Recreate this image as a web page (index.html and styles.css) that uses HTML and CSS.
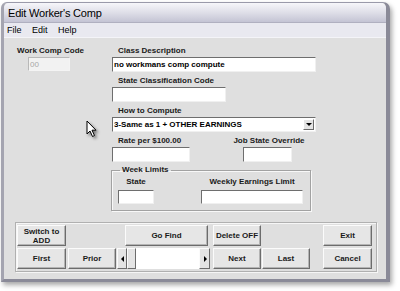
FILE: index.html
```html
<!DOCTYPE html>
<html lang="en">
<head>
    <meta charset="UTF-8">
    <title>Edit Worker's Comp</title>
    <link rel="stylesheet" href="styles.css">
</head>
<body>
    <div class="window">
        <div class="titlebar">Edit Worker's Comp</div>
        <div class="menubar">
            <span>File</span>
            <span>Edit</span>
            <span>Help</span>
        </div>
        <div class="client">
            <div class="form">
                <div class="col-left">
                    <div class="label">Work Comp Code</div>
                    <div class="input code disabled">00</div>
                </div>
                <div class="col-main">
                    <div class="field">
                        <div class="label">Class Description</div>
                        <div class="input wide">no workmans comp compute</div>
                    </div>
                    <div class="field">
                        <div class="label">State Classification Code</div>
                        <div class="input medium"></div>
                    </div>
                    <div class="field">
                        <div class="label">How to Compute</div>
                        <div class="input wide select">
                            <span>3-Same as 1 + OTHER EARNINGS</span>
                            <span class="drop"></span>
                        </div>
                    </div>
                    <div class="field-row">
                        <div class="field">
                            <div class="label">Rate per $100.00</div>
                            <div class="input rate"></div>
                        </div>
                        <div class="field centered override">
                            <div class="label">Job State Override</div>
                            <div class="input small"></div>
                        </div>
                    </div>
                    <fieldset class="group">
                        <legend>Week Limits</legend>
                        <div class="group-row">
                            <div class="field centered">
                                <div class="label">State</div>
                                <div class="input state"></div>
                            </div>
                            <div class="field centered limit">
                                <div class="label">Weekly Earnings Limit</div>
                                <div class="input earnings"></div>
                            </div>
                        </div>
                    </fieldset>
                </div>
            </div>

            <div class="buttons">
                <div class="btn-row">
                    <div class="btn two-line">Switch to<br>ADD</div>
                    <div class="btn go-find">Go Find</div>
                    <div class="btn delete">Delete OFF</div>
                    <div class="btn exit">Exit</div>
                </div>
                <div class="btn-row">
                    <div class="btn">First</div>
                    <div class="btn prior">Prior</div>
                    <div class="scroll">
                        <div class="arrow left"></div>
                        <div class="thumb"></div>
                        <div class="track"></div>
                        <div class="arrow right"></div>
                    </div>
                    <div class="btn next">Next</div>
                    <div class="btn last">Last</div>
                    <div class="btn cancel">Cancel</div>
                </div>
            </div>

            <svg class="cursor" width="12" height="18" viewBox="0 0 12 18">
                <path d="M1 1 L1 14 L4 11 L6.5 16.5 L8.5 15.5 L6 10.2 L10 10.2 Z" fill="#fff" stroke="#000" stroke-width="1" stroke-linejoin="miter"/>
            </svg>
        </div>
    </div>
</body>
</html>
```

FILE: styles.css
```css
body {
    margin: 0;
    background: #ffffff;
    font-family: 'Liberation Sans', Arial, sans-serif;
    width: 400px;
    height: 291px;
    overflow: hidden;
}

.window {
    margin: 2px 0 0 1px;
    width: 382px;
    border: 1px solid #8e8e9e;
    border-width: 1px 4px 3px 3px;
    border-color: #9a9aaa #8a8a98 #8a8a98 #a4a4b0;
    border-radius: 6px 7px 0 0;
    box-shadow: 2px 3px 5px rgba(0,0,0,0.35);
    background: #dfdfdf;
}

.titlebar {
    height: 19px;
    line-height: 20px;
    padding-left: 4px;
    font-size: 11px;
    letter-spacing: -0.2px;
    color: #000;
    background: linear-gradient(#f6f6fa, #dcdce6 55%, #c4c4d4);
    border-radius: 5px 5px 0 0;
    border-bottom: 1px solid #b0b0c0;
}

.menubar {
    height: 14px;
    line-height: 14px;
    padding-left: 3px;
    font-size: 9px;
    background: #e9e9f0;
    border-bottom: 1px solid #f4f4f8;
}

.menubar span {
    margin-right: 8px;
}

.client {
    position: relative;
    height: 241px;
    background: #dfdfdf;
}

.form {
    display: flex;
    padding: 6px 0 0 13px;
}

.label {
    font-size: 8px;
    font-weight: bold;
    line-height: 13px;
    height: 13px;
    color: #1a1a1a;
    white-space: nowrap;
}

.input {
    box-sizing: border-box;
    height: 15px;
    background: #fff;
    border: 1px solid;
    border-color: #6e6e6e #f0f0f0 #f0f0f0 #6e6e6e;
    font-size: 8px;
    font-weight: bold;
    line-height: 13px;
    padding-left: 1px;
    color: #000;
    white-space: nowrap;
    overflow: hidden;
}

.col-left {
    width: 95px;
}

.col-left .input {
    margin: 0 0 0 11px;
}

.code {
    width: 42px;
    height: 14px;
}

.disabled {
    background: #f2f2f2;
    color: #a8a8a8;
    font-weight: normal;
    border-color: #b8b8b8 #f4f4f4 #f4f4f4 #b8b8b8;
}

.col-main .field > .label {
    padding-left: 6px;
}

.field {
    margin-bottom: 2px;
}

.wide {
    width: 204px;
}

.medium {
    width: 114px;
}

.select {
    display: flex;
    justify-content: space-between;
}

.select .drop {
    position: relative;
    width: 11px;
    height: 11px;
    margin: 1px 1px 0 0;
    box-sizing: border-box;
    background: #e4e4e4;
    border: 1px solid;
    border-color: #fff #6a6a6a #6a6a6a #fff;
}

.select .drop::after {
    content: "";
    position: absolute;
    left: 2px;
    top: 3px;
    border-left: 3px solid transparent;
    border-right: 3px solid transparent;
    border-top: 3px solid #000;
}

.field-row {
    display: flex;
}

.rate {
    width: 78px;
}

.centered {
    display: flex;
    flex-direction: column;
    align-items: center;
}

.col-main .centered > .label {
    padding-left: 0;
}

.override {
    margin-left: 38px;
    width: 82px;
}

.override .input {
    margin-right: 4px;
}

.small {
    width: 49px;
}

.group {
    margin: 0 0 0 -1px;
    padding: 0 0 6px 6px;
    width: 192px;
    border: 1px solid #a2a2a2;
    box-shadow: inset 1px 1px 0 #f8f8f8, 1px 1px 0 #f8f8f8;
}

.group legend {
    font-size: 8px;
    font-weight: bold;
    line-height: 12px;
    padding: 0 2px;
    margin-left: 2px;
    color: #1a1a1a;
}

.group-row {
    display: flex;
}

.group .field {
    margin-bottom: 0;
}

.group .label {
    height: 14px;
    line-height: 12px;
}

.state {
    width: 36px;
    height: 14px;
}

.limit {
    margin-left: 47px;
}

.earnings {
    width: 102px;
    height: 14px;
}

.buttons {
    margin: 11px 0 0 11px;
    width: 359px;
    padding: 2px 0 2px 1px;
    border: 1px solid #b0b0b0;
    box-shadow: inset 1px 1px 0 #f6f6f6, 1px 1px 0 #f6f6f6;
    display: flex;
    flex-direction: column;
    gap: 2px;
}

.btn-row {
    display: flex;
    height: 21px;
}

.btn {
    box-sizing: border-box;
    width: 49px;
    height: 21px;
    background: #e6e6e6;
    border: 1px solid;
    border-color: #fbfbfb #6c6c6c #6c6c6c #fbfbfb;
    box-shadow: inset -1px -1px 0 #b4b4b4;
    font-size: 8px;
    font-weight: bold;
    color: #1a1a1a;
    display: flex;
    align-items: center;
    justify-content: center;
    text-align: center;
    line-height: 9px;
}

.go-find {
    width: 83px;
    margin-left: 59px;
}

.delete {
    width: 48px;
    margin-left: 5px;
}

.exit {
    margin-left: 62px;
}

.prior {
    width: 48px;
    margin-left: 2px;
}

.next {
    width: 48px;
    margin-left: 3px;
}

.last {
    width: 48px;
    margin-left: 1px;
}

.cancel {
    margin-left: 13px;
}

.scroll {
    display: flex;
    width: 93px;
    height: 21px;
    margin-left: 1px;
}

.scroll .arrow,
.scroll .thumb {
    position: relative;
    box-sizing: border-box;
    height: 21px;
    background: #e4e4e4;
    border: 1px solid;
    border-color: #fbfbfb #6c6c6c #6c6c6c #fbfbfb;
}

.arrow.left {
    width: 10px;
}

.arrow.right {
    width: 11px;
}

.scroll .thumb {
    width: 9px;
}

.scroll .track {
    flex: 1;
    background: #fff;
}

.arrow.left::after,
.arrow.right::after {
    content: "";
    position: absolute;
    top: 7px;
    border-top: 3px solid transparent;
    border-bottom: 3px solid transparent;
}

.arrow.left::after {
    left: 3px;
    border-right: 3px solid #000;
}

.arrow.right::after {
    left: 4px;
    border-left: 3px solid #000;
}

.cursor {
    position: absolute;
    left: 82px;
    top: 82px;
    filter: drop-shadow(2px 2px 1.5px rgba(0,0,0,0.45));
}
```
